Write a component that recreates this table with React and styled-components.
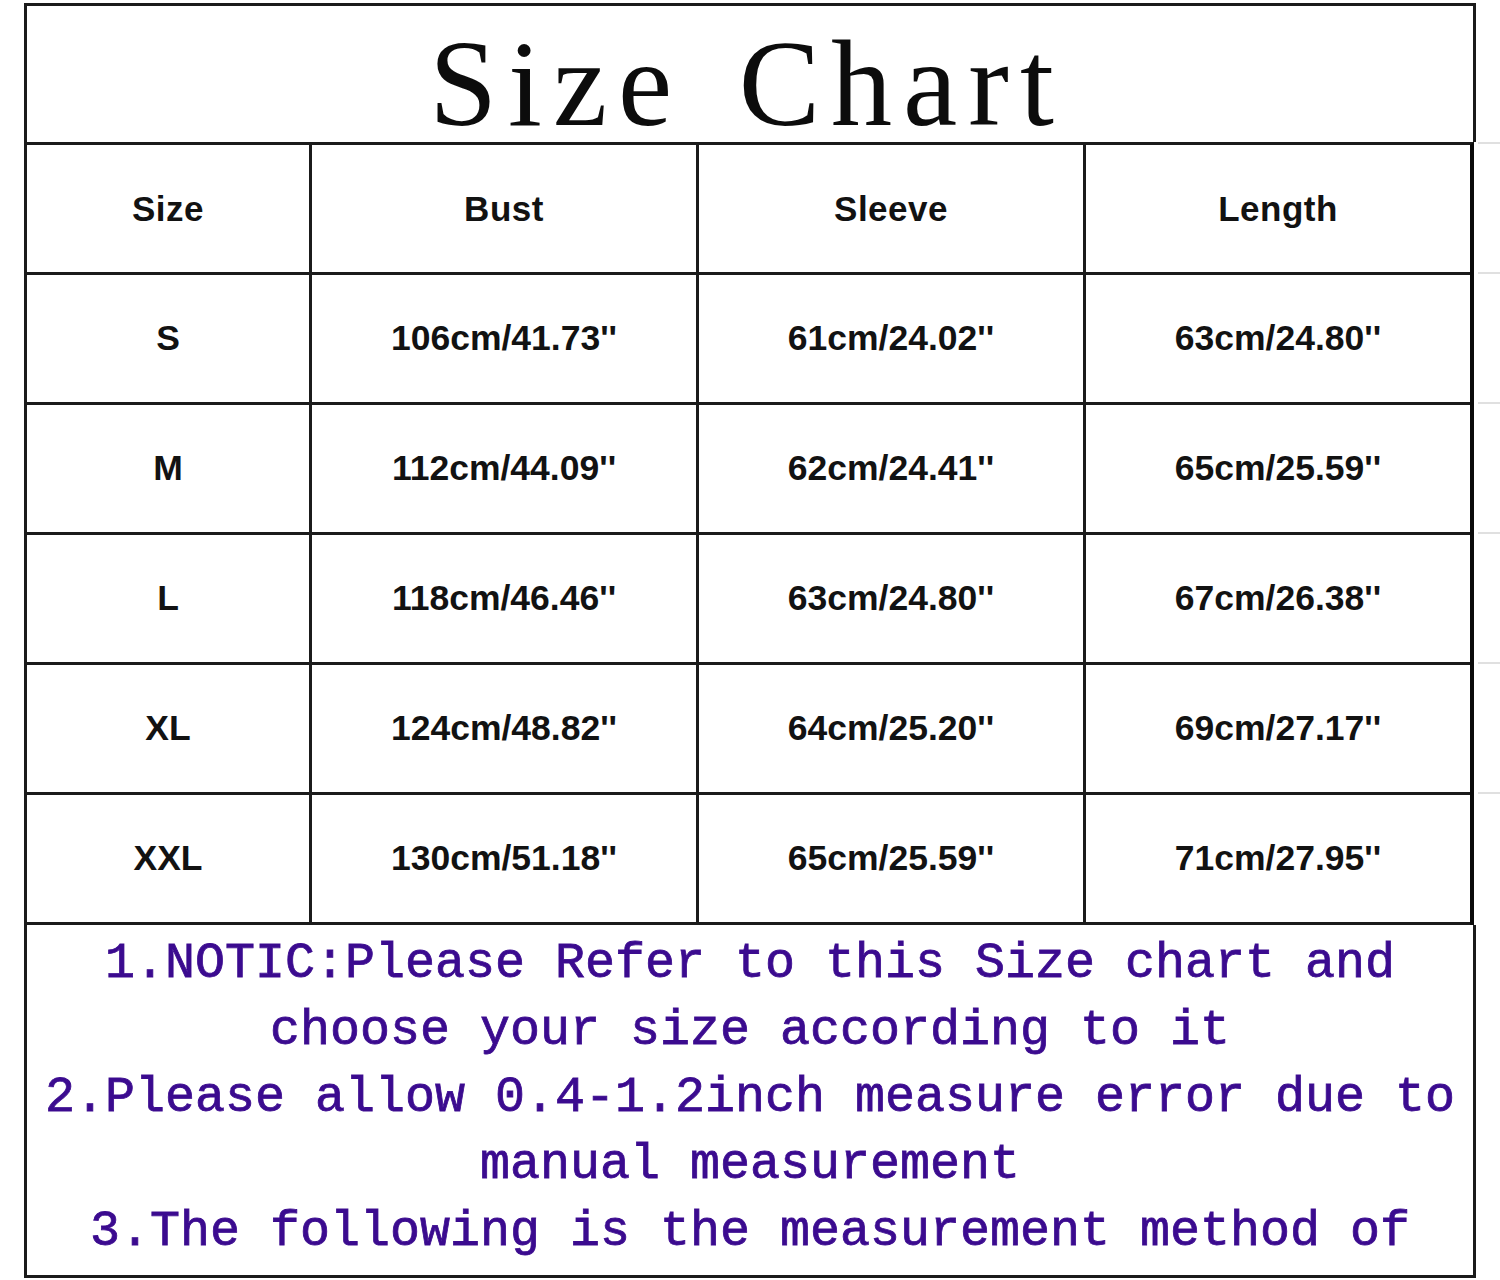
import styled, { createGlobalStyle } from 'styled-components';

const GlobalStyle = createGlobalStyle`
  html, body {
    margin: 0;
    padding: 0;
    background: #ffffff;
  }
  body {
    width: 1500px;
    height: 1280px;
    overflow: hidden;
  }
`;

const Frame = styled.div`
  width: 1452px;
  padding: 3px 0 0 24px;
  display: flex;
  flex-direction: column;
`;

const TitleBox = styled.div`
  height: 136px;
  border: 3px solid #1b1b1b;
  border-bottom: none;
  display: flex;
  align-items: center;
  justify-content: center;
`;

const Title = styled.h1`
  margin: 20px 0 0 -6px;
  font-family: "Liberation Serif", "DejaVu Serif", serif;
  font-weight: normal;
  font-size: 122px;
  line-height: 1;
  letter-spacing: 11px;
  word-spacing: 14px;
  color: #0c0c0c;
`;

const Table = styled.div`
  width: 1450px;
  display: grid;
  grid-template-columns: 285px 387px 387px 1fr;
  grid-auto-rows: 130px;
  border-top: 3px solid #1b1b1b;
  border-left: 3px solid #1b1b1b;
  border-right: 4px solid #0a0a0a;
  box-sizing: border-box;
`;

const Cell = styled.div`
  position: relative;
  display: flex;
  align-items: center;
  justify-content: center;
  border-bottom: 3px solid #1b1b1b;
  border-right: ${({ last }) => (last ? 'none' : '3px solid #1b1b1b')};
  box-sizing: border-box;
  font-family: "Liberation Sans", Arial, sans-serif;
  font-weight: bold;
  font-size: ${({ head }) => (head ? '35px' : '35.5px')};
  letter-spacing: ${({ head }) => (head ? '0.5px' : '0px')};
  color: #121212;

  ${({ last }) => last && `
    &::after {
      content: '';
      position: absolute;
      top: -3px;
      left: calc(100% + 8px);
      width: 26px;
      height: 2px;
      background: #e0e0e0;
    }
  `}
`;

const Notes = styled.div`
  height: 345px;
  border: 3px solid #1b1b1b;
  border-top: none;
  padding-top: 5px;
  box-sizing: content-box;
  display: flex;
  flex-direction: column;
  align-items: center;
  overflow: hidden;
`;

const NoteLine = styled.div`
  font-family: "Liberation Mono", "DejaVu Sans Mono", monospace;
  font-size: 50px;
  line-height: 67px;
  white-space: pre;
  color: #3b0b8f;
  -webkit-text-stroke: 0.8px #3b0b8f;
`;

const headers = ['Size', 'Bust', 'Sleeve', 'Length'];

const rows = [
  ['S', "106cm/41.73''", "61cm/24.02''", "63cm/24.80''"],
  ['M', "112cm/44.09''", "62cm/24.41''", "65cm/25.59''"],
  ['L', "118cm/46.46''", "63cm/24.80''", "67cm/26.38''"],
  ['XL', "124cm/48.82''", "64cm/25.20''", "69cm/27.17''"],
  ['XXL', "130cm/51.18''", "65cm/25.59''", "71cm/27.95''"],
];

const notes = [
  '1.NOTIC:Please Refer to this Size chart and',
  'choose your size according to it',
  '2.Please allow 0.4-1.2inch measure error due to',
  'manual measurement',
  '3.The following is the measurement method of',
];

const App = () => (
  <>
    <GlobalStyle />
    <Frame>
      <TitleBox>
        <Title>Size Chart</Title>
      </TitleBox>
      <Table>
        {headers.map((h, i) => (
          <Cell key={h} head last={i === headers.length - 1}>
            {h}
          </Cell>
        ))}
        {rows.map((row) => row.map((value, i) => (
          <Cell key={`${row[0]}-${i}`} last={i === row.length - 1}>
            {value}
          </Cell>
        )))}
      </Table>
      <Notes>
        {notes.map((line) => (
          <NoteLine key={line}>{line}</NoteLine>
        ))}
      </Notes>
    </Frame>
  </>
);

export default App;
